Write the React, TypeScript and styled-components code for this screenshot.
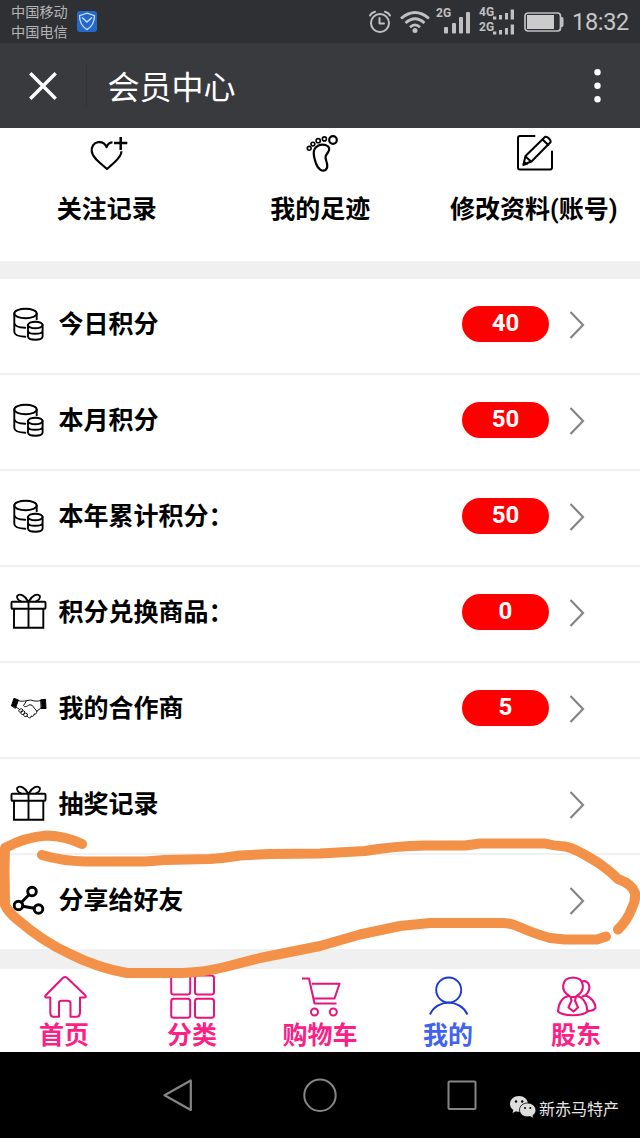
import React from "react";
import styled, { createGlobalStyle } from "styled-components";

const GlobalStyle = createGlobalStyle`
  * { box-sizing: border-box; }
  body { margin: 0; background: #fff; }
`;

const sans = `Roboto, "Noto Sans CJK SC", sans-serif`;
const cjk = `"Noto Sans CJK SC", sans-serif`;

const Screen = styled.div`
  position: relative;
  display: flex;
  flex-direction: column;
  width: 640px;
  height: 1138px;
  overflow: hidden;
  background: #fff;
  color: #000;
  font-family: ${sans};
  svg { display: block; flex: none; overflow: visible; }
`;

const StatusBar = styled.header`
  display: flex;
  align-items: center;
  height: 43px;
  padding: 0 11px;
  background: #2f3034;
  color: #b4b4b6;
`;

const Carriers = styled.div`
  width: 66px;
  padding-bottom: 2px;
  font: 14.2px/20px ${cjk};
`;

const StatusIcons = styled.div`
  display: flex;
  align-items: center;
  margin-left: auto;
  color: #c0c0c2;
`;

const Clock = styled.time`
  width: 57px;
  margin-left: 8px;
  padding-top: 1px;
  font: 23.5px/43px Roboto, sans-serif;
  letter-spacing: -0.3px;
  color: #c6c6c8;
  white-space: nowrap;
`;

const TitleBar = styled.div`
  display: flex;
  align-items: center;
  height: 85px;
  padding: 0 39px 0 29px;
  background: #393a3e;
  color: #fff;
`;

const Divider = styled.i`
  width: 1px;
  height: 43px;
  margin: 0 20.5px 0 29px;
  background: #333438;
`;

const Title = styled.h1`
  margin: 0;
  flex: 1;
  padding-bottom: 2px;
  font: 400 32px/48px ${cjk};
`;

const Shortcuts = styled.nav`
  display: grid;
  grid-template-columns: repeat(3, 213.5px);
  height: 133px;
`;

const Shortcut = styled.div`
  display: flex;
  flex-direction: column;
  align-items: center;
  padding-top: 4px;
  font: 700 25px/36px ${sans};
  white-space: nowrap;
  svg { margin-bottom: 19.500px; }
`;

const Gap = styled.div<{ $h: number }>`
  height: ${(p) => p.$h}px;
  background: #f0f0f0;
`;

const Row = styled.div<{ $last?: boolean }>`
  display: flex;
  align-items: center;
  height: ${(p) => (p.$last ? 94 : 96)}px;
  padding: 0 54px 4px 10px;
  border-bottom: ${(p) => (p.$last ? 0 : 2)}px solid #f1f1f1;
`;

const RowLabel = styled.span`
  flex: 1;
  margin-left: 11.5px;
  padding-top: 2px;
  font: 700 25px/36px ${sans};
`;

const Pill = styled.span`
  width: 87px;
  height: 36px;
  margin-right: 20px;
  border-radius: 18px;
  background: #f00;
  color: #fff;
  font: 700 24px/34px Roboto, sans-serif;
  text-align: center;
`;

const TabBar = styled.nav`
  display: grid;
  grid-template-columns: repeat(5, 128px);
  height: 83px;
`;

const Tab = styled.div<{ $active?: boolean }>`
  display: flex;
  flex-direction: column;
  align-items: center;
  padding-top: 5px;
  color: ${(p) => (p.$active ? "#4262f0" : "#fb1f86")};
  font: 700 25px/36px ${sans};
  svg { color: ${(p) => (p.$active ? "#1c38d8" : "#e8127c")}; }
`;

const SystemBar = styled.footer`
  display: flex;
  align-items: center;
  height: 86px;
  padding-left: 162px;
  background: #000;
`;

const SystemKeys = styled.div`
  display: flex;
  gap: 110px;
`;

const Account = styled.div`
  display: flex;
  align-items: center;
  gap: 3px;
  margin: 26px 0 0 32px;
  color: #e6e6e6;
  font: 16px/24px ${cjk};
  white-space: nowrap;
`;

const Scribble = styled.svg`
  position: absolute;
  left: 0;
  top: 820px;
  pointer-events: none;
`;

const line = { fill: "none", stroke: "currentColor", strokeLinecap: "round", strokeLinejoin: "round" } as const;

const ShieldIcon = () => (
  <svg width="20" height="21" viewBox="0 0 20 21">
    <rect width="20" height="21" rx="3" fill="#2468cb" />
    <path d="M10 2.2 17.500 4.600C17.500 11 14.500 16 10 18.600 5.500 16 2.500 11 2.500 4.600Z" fill="none" stroke="#c9dcf5" strokeWidth="1.300" />
    <path d="M5 6.500 10 11 15 6.500" fill="none" stroke="#c9dcf5" strokeWidth="1.500" />
  </svg>
);

const AlarmIcon = () => (
  <svg width="22" height="24" viewBox="0 0 22 24" {...line} strokeWidth="2">
    <circle cx="11" cy="13" r="9" />
    <path d="M10.500 8v5.500h4.500M1 5.500Q2.500 2.500 6 1.700M21 5.500Q19.500 2.500 16 1.700" />
  </svg>
);

const WifiIcon = () => (
  <svg width="30" height="24" viewBox="0 0 30 24" {...line} strokeLinecap="butt" strokeWidth="2.700">
    <path d="M1 8.500Q15-3.500 29 8.500M5.500 13Q15 4.500 24.500 13M10 17.300Q15 12.500 20 17.300" />
    <circle cx="15" cy="20.500" r="2.500" fill="currentColor" stroke="none" />
  </svg>
);

const SignalIcon = () => (
  <svg width="35" height="28" viewBox="0 0 35 28" fill="currentColor">
    <text x="0" y="8.500" fontFamily="Roboto, sans-serif" fontWeight="700" fontSize="12">2G</text>
    <rect x="8" y="19" width="4" height="6.500" rx="1" />
    <rect x="16" y="15" width="4" height="10.500" rx="1" />
    <rect x="23" y="9" width="4" height="16.500" rx="1" />
    <rect x="30" y="4" width="4" height="21.500" rx="1" />
  </svg>
);

const DualSignalIcon = () => (
  <svg width="36" height="30" viewBox="0 0 36 30" fill="currentColor">
    {[{ g: "4G", y: 0 }, { g: "2G", y: 15 }].map(({ g, y }) => (
      <g key={g} transform={`translate(0 ${y - 1})`}>
        <text x="0" y={y ? 9.500 : 10} fontFamily="Roboto, sans-serif" fontWeight="700" fontSize="12">{g}</text>
        <rect x="14" y="10.500" width="3.300" height="3" />
        <rect x="20" y="9" width="3" height="4.500" />
        <rect x="26" y="7" width="3" height="6.500" />
        <rect x="31.700" y="3.500" width="3.300" height="10" />
      </g>
    ))}
  </svg>
);

const BatteryIcon = () => (
  <svg width="40" height="20" viewBox="0 0 40 20">
    <rect x="1" y="1" width="35.500" height="18" rx="3" fill="none" stroke="currentColor" strokeWidth="1.700" />
    <rect x="3" y="3" width="27" height="14" fill="#cbcbcb" />
    <path d="M37 5h1q1.500 0 1.500 2v6q0 2-1.500 2h-1z" fill="currentColor" />
  </svg>
);

const CloseIcon = () => (
  <svg width="28" height="28" viewBox="0 0 28 28" {...line} strokeLinecap="butt" strokeWidth="3.400">
    <path d="M1.300 1.300 26.700 26.700M26.700 1.300 1.300 26.700" />
  </svg>
);

const MoreIcon = () => (
  <svg width="7" height="34" viewBox="0 0 7 34" fill="currentColor">
    <circle cx="3.500" cy="3.300" r="3.200" />
    <circle cx="3.500" cy="16.800" r="3.200" />
    <circle cx="3.500" cy="30.300" r="3.200" />
  </svg>
);

const HeartPlusIcon = () => (
  <svg width="44" height="40" viewBox="0 0 44 40" {...line} strokeLinecap="butt" strokeWidth="2.200">
    <path d="M27.500 11.300C24.500 11.300 22.500 13.300 21.600 16.200 20 12.200 16.800 10.700 13.200 11.100 8.500 11.700 6.200 16 6.800 20.500 7.400 25 11 28.500 14.500 31.500L22 38 29 31.700C33 28.200 36.300 25 36.500 20.300" transform="translate(0 -1)" />
    <path d="M35.700 5v13M29 11h13.300" strokeWidth="2.500" />
  </svg>
);

const FootIcon = () => (
  <svg width="44" height="40" viewBox="-2 0 44 40" {...line} strokeWidth="2.200">
    <circle cx="9.200" cy="16.300" r="1.900" strokeWidth="1.600" />
    <circle cx="12.900" cy="12.100" r="1.900" strokeWidth="1.600" />
    <circle cx="18.200" cy="8.700" r="2.100" strokeWidth="1.600" />
    <circle cx="24.400" cy="6.900" r="2" strokeWidth="1.600" />
    <circle cx="33" cy="8" r="3.800" />
    <path d="M14 18.500C15.500 14 20.500 11.700 25.500 13 29.500 14.200 30 17.200 28.200 20 26 23 24.800 24.500 26 28 27.800 33 28.300 36 25.500 38 22 40 18 37 16 31.500 14.500 27 13 23 14 18.500Z" />
  </svg>
);

const EditIcon = () => (
  <svg width="44" height="40" viewBox="4 0 44 40" {...line} strokeWidth="2">
    <path d="M26.500 4H12q-2 0-2 2V35.500q0 2 2 2H42q2 0 2-2V19.500" />
    <path d="M15.500 32.500 17.500 24 37.200 4.800Q39 4.500 41 6.500 43 8.500 42.700 10L23.500 29.500ZM17.500 24.500 23 29.500M34.500 7.500 40.300 13" />
    <path d="M15 33l1.200-4 3 3z" fill="currentColor" strokeWidth="1" />
  </svg>
);

const CoinsIcon = () => (
  <svg width="37" height="38" viewBox="0 0.500 37 38" {...line} strokeWidth="1.900">
    <ellipse cx="15.500" cy="9" rx="11.200" ry="4.700" />
    <path d="M4.300 9V27.500C4.500 30.500 9 32 15.300 32.200M4.300 18.300C4.500 21.500 9.500 23.200 15.300 23.200M26.700 9V14.800" />
    <ellipse cx="25.300" cy="20.500" rx="7.300" ry="3.200" />
    <path d="M18 20.500V32.200C18.500 36.300 32 36.300 32.600 32.200V20.500M18 26.300C18.500 30.300 32 30.300 32.600 26.300" />
  </svg>
);

const GiftIcon = () => (
  <svg width="37" height="38" viewBox="0 2 37 38" {...line} strokeLinejoin="miter" strokeWidth="1.900">
    <rect x="1.500" y="10.800" width="34" height="7" rx="1" />
    <path d="M4 17.800V36.800H33.300V17.800M18.500 10.500V36.800M18 10.300C14.500 4 9.500 2.200 7.300 4.800 6 7 8.500 9.300 11 10.300M19 10.300C22.500 4 27.500 2.200 29.700 4.800 31 7 28.500 9.300 26 10.300" />
  </svg>
);

const HandshakeIcon = () => (
  <svg width="37" height="38" viewBox="0 1 37 38" {...line} strokeWidth="0.950">
    <path d="M1.500 17.500 4 10.300 8.500 12 5.500 20ZM31 11.800 35.500 11.300 36 20.500 31.500 20.500Z" fill="currentColor" />
    <path d="M8 12.500C11 14 14 13 16.500 12.700L20.500 12C24 13.300 27.500 13.500 31 12.500M6 19 9.500 21.500C8 23 9 24.500 11 24 10.500 26 12 27.200 13.500 26.300 13.500 28.500 15.500 29.300 17 28L18.500 29.500C20 30.500 21.500 29.500 21 28 23 29 24.500 27.500 24 26 26 26.500 27 25 26.500 23.500L31.500 19.500M16.500 13 13.500 17.500C14.500 19.500 17.500 18.500 19 16.800L22 17.200 27 23.500M9.500 21.500Q12 19.500 12.700 22L11 24Q14 21.500 15 24L13.500 26.300Q16 24 17.500 26L17 28" />
  </svg>
);

const ShareIcon = () => (
  <svg width="37" height="38" viewBox="0 -1 37 38" {...line} strokeWidth="2.900">
    <circle cx="22" cy="9.500" r="4.300" />
    <circle cx="8.500" cy="23.500" r="4.300" />
    <circle cx="28.500" cy="27" r="4.300" />
    <path d="M19 12.800 11.500 20.300M12.800 24.200 24.200 26.200" />
  </svg>
);

const Chevron = () => (
  <svg width="17" height="28" viewBox="0 0 17 28" {...line} strokeLinecap="butt" strokeLinejoin="miter" strokeWidth="2.200" color="#858585" style={{ marginTop: 2 }}>
    <path d="M1.500 1 14 14 1.500 27" />
  </svg>
);

const HomeIcon = () => (
  <svg width="44" height="44" viewBox="-1 0 44 44" {...line} strokeWidth="2">
    <path d="M20 3.800Q22 2.300 24 3.800L42.500 21.500Q43.500 23 41.500 23.500H37V39Q36.500 42.800 34 42.800H27.500V29Q27.500 26.700 24.500 26.700H18.500Q16 26.700 16 29V42.800H10Q7.500 42.800 7.300 39V23.500H3.500Q1.500 23.500 2.500 21.500Z" />
  </svg>
);

const GridIcon = () => (
  <svg width="44" height="44" viewBox="-1.500 0 44 44" {...line} strokeWidth="2">
    <rect x="-0.300" y="1.500" width="19" height="19" rx="2.500" />
    <rect x="23.500" y="1.500" width="19" height="19" rx="2.500" />
    <rect x="-0.300" y="24.800" width="19" height="19" rx="2.500" />
    <rect x="23.500" y="24.800" width="19" height="19" rx="2.500" />
  </svg>
);

const CartIcon = () => (
  <svg width="44" height="44" viewBox="0 0 44 44" {...line} strokeWidth="2" strokeLinecap="butt">
    <path d="M4 4.500H11L16.500 29.500H38.500M14 9.700H41.500L36.500 24.500H15.500" />
    <circle cx="16.500" cy="38" r="3.500" />
    <circle cx="35.300" cy="38" r="3.500" />
  </svg>
);

const PersonIcon = () => (
  <svg width="44" height="44" viewBox="0 0 44 44" {...line} strokeWidth="1.900" strokeLinecap="butt">
    <circle cx="22.700" cy="16" r="12.500" />
    <path d="M4 40.500C11 24.700 34 24.700 41.500 40.500" />
  </svg>
);

const ShareholderIcon = () => (
  <svg width="44" height="44" viewBox="0 0 44 44" {...line} strokeWidth="2.100">
    <path d="M15.500 22C6.500 17 6.500 4 19 3.500 31.500 4 31.500 17 22.500 22M15.500 22C8.500 22.500 4.500 29 4 37.500 9 42.500 28.500 42.500 33.500 37.500 33 29 28.500 22.500 22.500 22" />
    <path d="M16.500 23H22L21 26.500 24 33.500 19.500 37.500 14.500 33.500 17.500 26.500Z" />
    <path d="M28 7.500C35.500 5 38.500 15.500 31 21.500 37 22.500 41.500 29 41.500 34 40 36.500 37.500 37 34 37M28.500 22.500 31 21.500" />
  </svg>
);

const BackKey = () => (
  <svg width="32" height="34" viewBox="0 0 32 34" {...line} strokeWidth="2.200" color="#858585">
    <path d="M28.800 2.500V32L2.500 17.300Z" />
  </svg>
);

const HomeKey = () => (
  <svg width="32" height="34" viewBox="0 0 32 34" {...line} strokeWidth="2" color="#858585">
    <circle cx="16" cy="17.300" r="15.700" />
  </svg>
);

const RecentKey = () => (
  <svg width="32" height="34" viewBox="0 0 32 34" {...line} strokeWidth="2" color="#858585">
    <rect x="2.500" y="3.500" width="27" height="27.500" rx="1" />
  </svg>
);

const WeChatIcon = () => (
  <svg width="26" height="23" viewBox="0 1 26 23">
    <path d="M9 0C4 0 0 3.500 0 8c0 2.500 1.300 4.500 3.300 6L2.500 17l3.500-1.800C12 17.500 18.500 13 18 7.500 17.500 3.300 14 0 9 0Z" fill="#dedede" />
    <path d="M17.500 7C13 7 9.500 10 9.500 14c0 4.500 5 8 10.500 6.500L23.500 22.500l-.6-3c1.900-1.400 3-3.200 3-5.300C25.900 10.200 22 7 17.500 7Z" fill="#dedede" stroke="#000" strokeWidth=".8" />
    <g fill="#000"><circle cx="6" cy="5.500" r="1.200" /><circle cx="12.200" cy="5.500" r="1.200" /><circle cx="15" cy="12" r="1" /><circle cx="20.300" cy="12" r="1" /></g>
  </svg>
);

const rows = [
  { icon: <CoinsIcon />, label: "今日积分", value: "40" },
  { icon: <CoinsIcon />, label: "本月积分", value: "50" },
  { icon: <CoinsIcon />, label: "本年累计积分：", value: "50" },
  { icon: <GiftIcon />, label: "积分兑换商品：", value: "0" },
  { icon: <HandshakeIcon />, label: "我的合作商", value: "5" },
  { icon: <GiftIcon />, label: "抽奖记录" },
  { icon: <ShareIcon />, label: "分享给好友" },
];

const tabs = [
  { icon: <HomeIcon />, label: "首页" },
  { icon: <GridIcon />, label: "分类" },
  { icon: <CartIcon />, label: "购物车" },
  { icon: <PersonIcon />, label: "我的", active: true },
  { icon: <ShareholderIcon />, label: "股东" },
];

export default function App() {
  return (
    <Screen>
      <GlobalStyle />
      <StatusBar>
        <Carriers>中国移动<br />中国电信</Carriers>
        <ShieldIcon />
        <StatusIcons>
          <AlarmIcon />
          <i style={{ width: 9 }} />
          <WifiIcon />
          <i style={{ width: 6 }} />
          <SignalIcon />
          <i style={{ width: 8 }} />
          <DualSignalIcon />
          <i style={{ width: 9 }} />
          <BatteryIcon />
          <Clock>18:32</Clock>
        </StatusIcons>
      </StatusBar>
      <TitleBar>
        <CloseIcon />
        <Divider />
        <Title>会员中心</Title>
        <MoreIcon />
      </TitleBar>
      <Shortcuts>
        <Shortcut><HeartPlusIcon />关注记录</Shortcut>
        <Shortcut><FootIcon />我的足迹</Shortcut>
        <Shortcut><EditIcon />修改资料(账号)</Shortcut>
      </Shortcuts>
      <Gap $h={18} />
      {rows.map((r, i) => (
        <Row key={r.label} $last={i === rows.length - 1}>
          {r.icon}
          <RowLabel>{r.label}</RowLabel>
          {r.value && <Pill>{r.value}</Pill>}
          <Chevron />
        </Row>
      ))}
      <Gap $h={20} />
      <TabBar>
        {tabs.map((t) => (
          <Tab key={t.label} $active={t.active}>{t.icon}{t.label}</Tab>
        ))}
      </TabBar>
      <SystemBar>
        <SystemKeys><BackKey /><HomeKey /><RecentKey /></SystemKeys>
        <Account><WeChatIcon />新赤马特产</Account>
      </SystemBar>
      <Scribble width="640" height="170" viewBox="0 820 640 170" fill="none" stroke="#f39148" strokeWidth="10" strokeLinecap="round" strokeLinejoin="round">
        <path d="M82 844Q65 836 47 835.500 25 837 5 848L4.500 870 5 905Q8 912 18 920 42 941 70 954 98 968 127 973H183Q205 972 225 967L260 958 320 946 360 934.500 400 926 430 923H503Q510 923 517 926 535 934 550 938L565 939.500H597L606 936.500" />
        <path d="M42 855Q62 861 85 861.500H145L165 860 210 859Q225 858 240 855.500L270 854 320 853.500 365 851Q395 846 425 845.500H465L480 843.500H545Q555 846 565 846.500 575 848 600 864 610 871 618 879 632 884 635 893 636 900 632 908 627 921 618 929.500" />
      </Scribble>
    </Screen>
  );
}
